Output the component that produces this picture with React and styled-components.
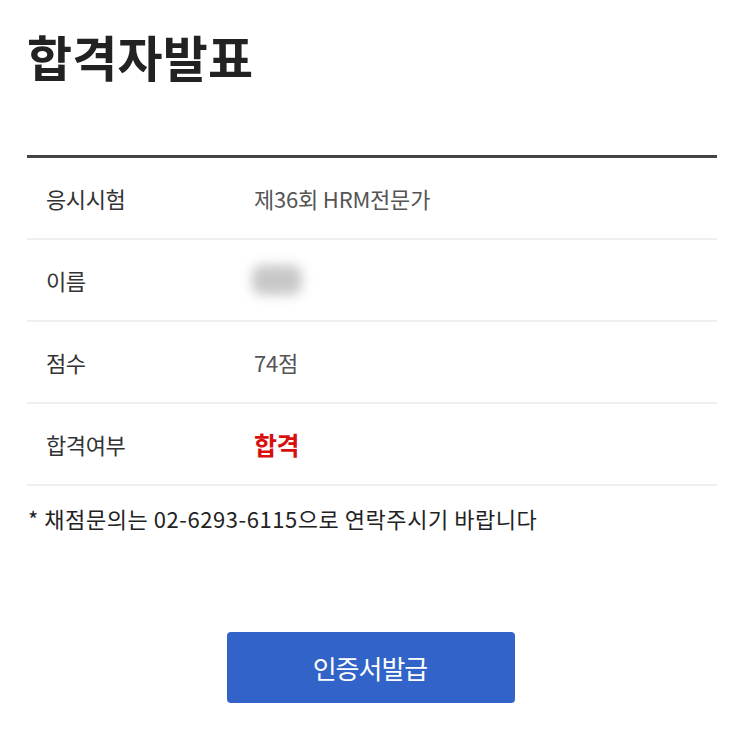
import React from 'react';
import styled, { createGlobalStyle } from 'styled-components';

const GlobalStyle = createGlobalStyle`
  body {
    margin: 0;
    background: #fff;
    font-family: "Noto Sans CJK KR", "Noto Sans", sans-serif;
  }
`;

const Page = styled.div`
  padding: 22px 26px 0 27px;
`;

const Title = styled.h1`
  margin: 0;
  font-size: 49px;
  font-weight: 700;
  color: #222;
  letter-spacing: 0.2px;
  line-height: 68px;
`;

const Table = styled.div`
  margin-top: 65px;
  border-top: 3px solid #444;
`;

const Row = styled.div`
  display: flex;
  align-items: center;
  height: 80px;
  border-bottom: 2px solid #eeeeee;
`;

const Label = styled.div`
  width: 208px;
  padding-left: 19px;
  font-size: 22px;
  color: #333;
  letter-spacing: -0.4px;
`;

const Value = styled.div`
  font-size: 22px;
  color: #555;
  letter-spacing: -0.2px;
`;

const Pass = styled.div`
  font-size: 25px;
  font-weight: 700;
  color: #d70f0f;
  letter-spacing: -0.5px;
`;

const Blurred = styled.div`
  width: 50px;
  height: 30px;
  margin-left: -2px;
  background: #c8c8c8;
  border-radius: 10px;
  filter: blur(6px);
`;

const Note = styled.p`
  margin: 16px 0 0 1px;
  font-size: 22px;
  color: #222;
  letter-spacing: 0.55px;
`;

const ButtonRow = styled.div`
  display: flex;
  justify-content: center;
  margin-top: 98px;
  padding-right: 2px;
`;

const IssueButton = styled.button`
  width: 288px;
  height: 71px;
  border: none;
  border-radius: 4px;
  background: #3163c9;
  color: #fff;
  font-family: inherit;
  font-size: 26px;
  letter-spacing: -1px;
  padding-right: 8px;
`;

const rows = [
  { label: '응시시험', value: '제36회 HRM전문가' },
  { label: '이름', blur: true },
  { label: '점수', value: '74점' },
  { label: '합격여부', pass: '합격' },
];

export default function App() {
  return (
    <>
      <GlobalStyle />
      <Page>
        <Title>합격자발표</Title>
        <Table>
          {rows.map((r) => (
            <Row key={r.label}>
              <Label>{r.label}</Label>
              {r.blur ? <Blurred /> : r.pass ? <Pass>{r.pass}</Pass> : <Value>{r.value}</Value>}
            </Row>
          ))}
        </Table>
        <Note>* 채점문의는 02-6293-6115으로 연락주시기 바랍니다</Note>
        <ButtonRow>
          <IssueButton>인증서발급</IssueButton>
        </ButtonRow>
      </Page>
    </>
  );
}
